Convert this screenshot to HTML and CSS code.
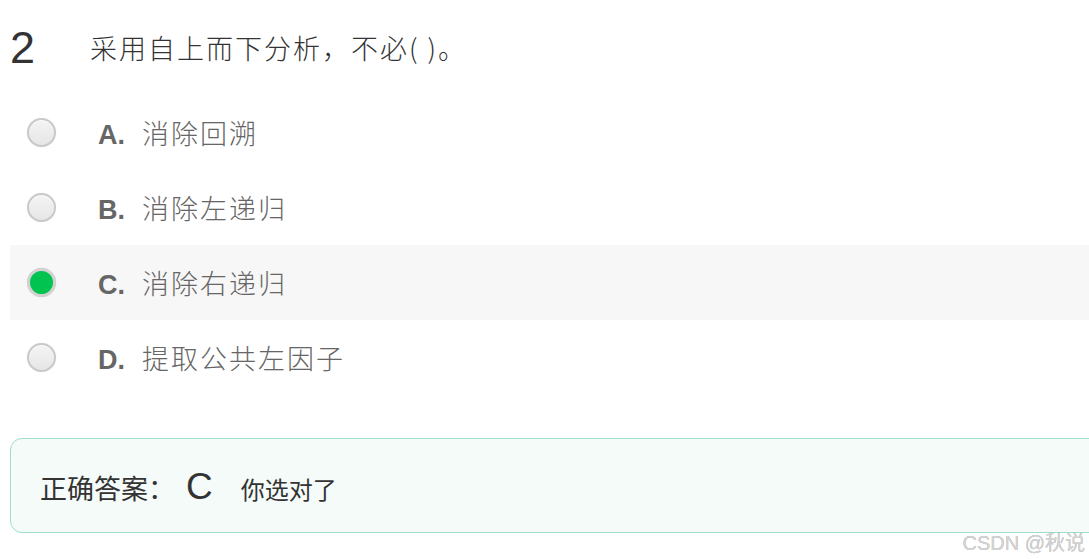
FILE: index.html
```html
<!DOCTYPE html>
<html lang="zh-CN">
<head>
<meta charset="utf-8">
<title>题目</title>
<link rel="stylesheet" href="styles.css">
</head>
<body>
<div class="page">
  <div class="question">
    <span class="qnum">2</span>
    <span class="qtext">采用自上而下分析，不必( )。</span>
  </div>
  <ul class="options">
    <li class="option"><span class="radio"></span><span class="body"><span class="label">A.</span><span class="otext">消除回溯</span></span></li>
    <li class="option"><span class="radio"></span><span class="body"><span class="label">B.</span><span class="otext">消除左递归</span></span></li>
    <li class="option selected"><span class="radio checked"></span><span class="body"><span class="label">C.</span><span class="otext">消除右递归</span></span></li>
    <li class="option"><span class="radio"></span><span class="body"><span class="label">D.</span><span class="otext">提取公共左因子</span></span></li>
  </ul>
  <div class="answer">
    <span class="answer-title">正确答案：</span><span class="answer-key">C</span><span class="answer-note">你选对了</span>
  </div>
</div>
<div class="watermark">CSDN @秋说</div>
</body>
</html>
```

FILE: styles.css
```css
html, body {
  margin: 0;
  padding: 0;
  background: #ffffff;
  overflow: hidden;
  width: 1089px;
  height: 559px;
}
.page {
  padding-left: 10px;
  width: 1110px;
}
.question {
  height: 95px;
  display: flex;
  align-items: center;
}
.qnum {
  width: 80px;
  font-family: "Liberation Sans", Arial, sans-serif;
  font-size: 45px;
  color: #333333;
  line-height: 1;
}
.qtext {
  font-family: "Noto Sans CJK SC", sans-serif;
  font-weight: 300;
  font-size: 27px;
  letter-spacing: 2px;
  color: #333333;
  line-height: 1;
}
.options {
  list-style: none;
  margin: 0;
  padding: 0;
}
.option {
  height: 75px;
  display: flex;
  align-items: center;
}
.option.selected {
  background: #f7f7f7;
}
.radio {
  box-sizing: border-box;
  width: 29px;
  height: 29px;
  margin-left: 17px;
  margin-right: 42px;
  border-radius: 50%;
  border: 2px solid #c9c9c9;
  background: linear-gradient(180deg, #f4f4f4 0%, #e6e6e6 100%);
  box-shadow: inset 0 1px 1px rgba(255,255,255,0.8), 0 0 1px rgba(0,0,0,0.15);
}
.radio.checked {
  border: 3px solid #d2d2d2;
  background: #00c350;
  box-shadow: 0 0 1px rgba(0,0,0,0.2);
}
.body {
  display: flex;
  align-items: baseline;
  padding-top: 2px;
}
.label {
  width: 44px;
  font-family: "Liberation Sans", Arial, sans-serif;
  font-weight: bold;
  font-size: 27px;
  color: #666666;
  line-height: 1;
}
.otext {
  font-family: "Noto Sans CJK SC", sans-serif;
  font-weight: 300;
  font-size: 27px;
  letter-spacing: 2px;
  color: #666666;
  line-height: 1;
}
.answer {
  box-sizing: border-box;
  margin-top: 43px;
  height: 95px;
  border: 1.5px solid #9ee0c6;
  border-radius: 12px;
  background: #f4fbf8;
  padding-left: 29px;
  display: flex;
  align-items: baseline;
  padding-top: 29px;
}
.answer-title {
  font-family: "Noto Sans CJK SC", sans-serif;
  font-size: 27px;
  color: #333333;
  line-height: 1.2;
}
.answer-key {
  font-family: "Liberation Sans", Arial, sans-serif;
  font-size: 37px;
  color: #333333;
  margin-left: 11px;
  margin-right: 28px;
  line-height: 1;
}
.answer-note {
  font-family: "Noto Sans CJK SC", sans-serif;
  font-size: 24px;
  color: #333333;
  line-height: 1.2;
}
.watermark {
  position: absolute;
  right: 4px;
  bottom: 5px;
  font-family: "Liberation Sans", "Noto Sans CJK SC", sans-serif;
  font-size: 20px;
  color: #d4d4d4;
  text-shadow: 0 0 0.5px rgba(80,80,80,0.6);
  line-height: 1.1;
}
```
